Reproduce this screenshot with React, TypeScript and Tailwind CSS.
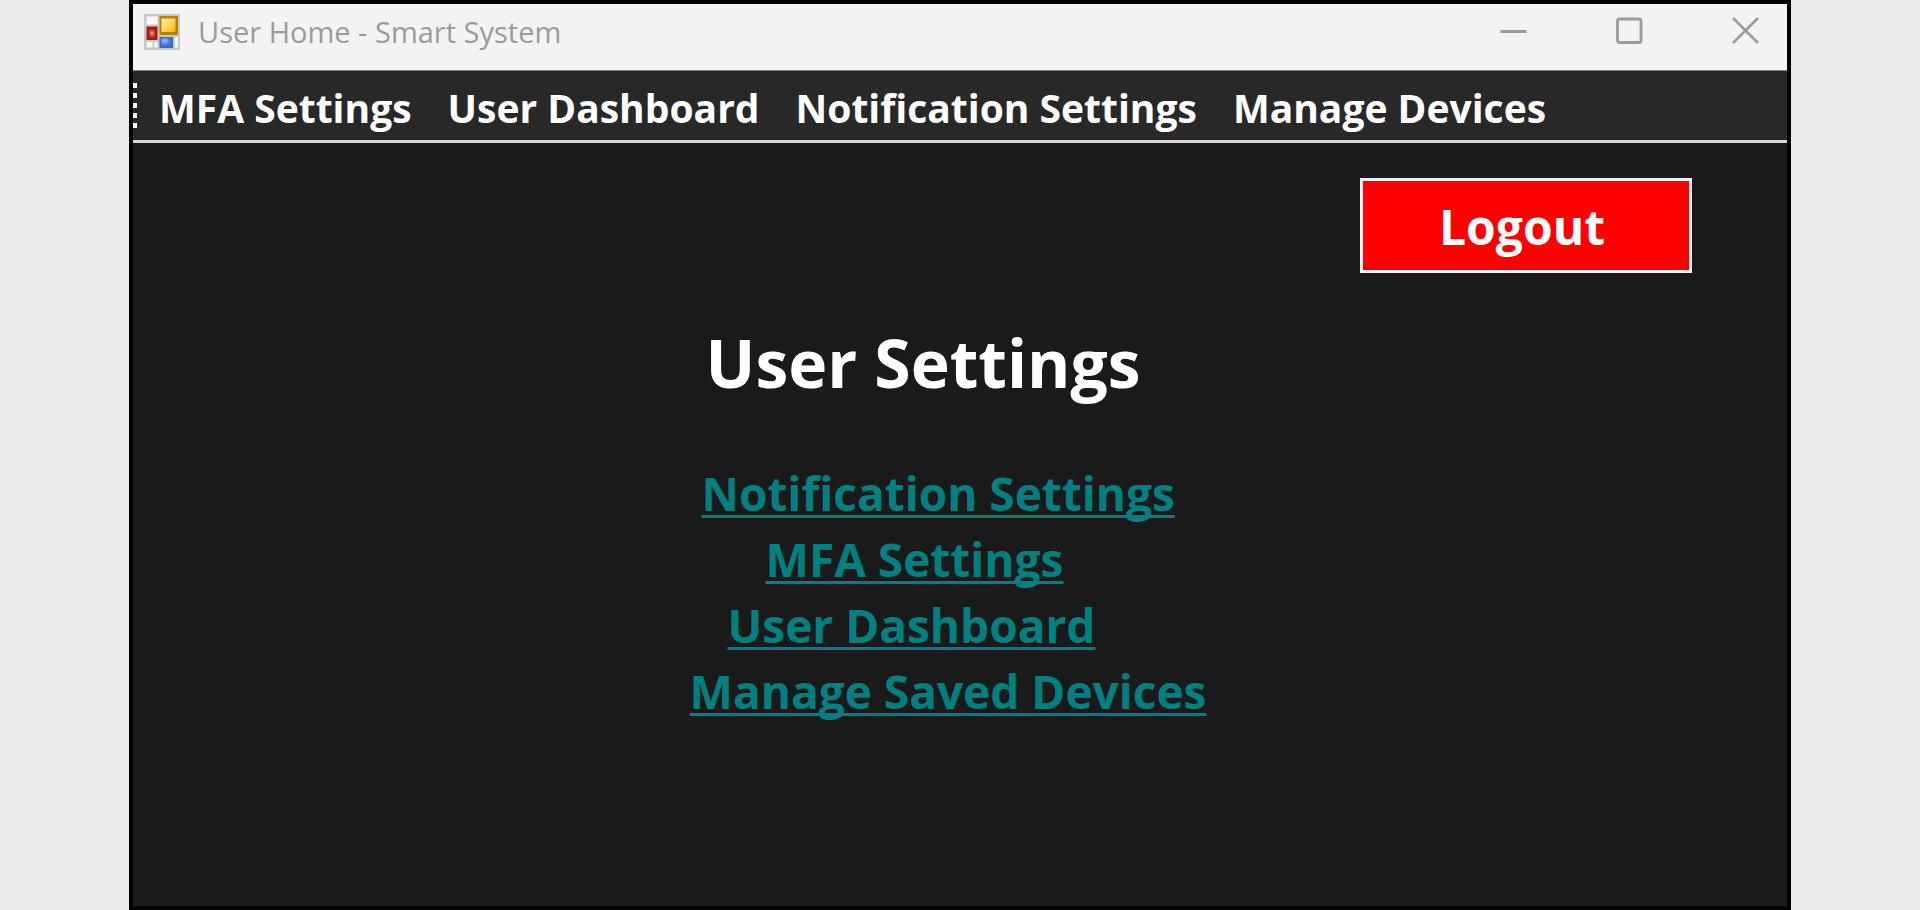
import { useState } from "react";

const menuItems = [
  { label: "MFA Settings", href: "#mfa" },
  { label: "User Dashboard", href: "#dashboard" },
  { label: "Notification Settings", href: "#notifications" },
  { label: "Manage Devices", href: "#devices" },
];

const settingsLinks = [
  { label: "Notification Settings", href: "#notifications", indent: "ml-3" },
  { label: "MFA Settings", href: "#mfa", indent: "ml-[76px]" },
  { label: "User Dashboard", href: "#dashboard", indent: "ml-[38px]" },
  { label: "Manage Saved Devices", href: "#devices", indent: "ml-0" },
];

function FormIcon() {
  return (
    <svg className="size-9" viewBox="0 0 36 36" aria-hidden="true">
      <defs>
        <linearGradient id="gold" x1="0" y1="0" x2="1" y2="1">
          <stop offset="0" stopColor="#fff0b0" />
          <stop offset="1" stopColor="#fbb800" />
        </linearGradient>
        <radialGradient id="red">
          <stop offset="0" stopColor="#f5a090" />
          <stop offset="1" stopColor="#c42a1c" />
        </radialGradient>
        <radialGradient id="blue" cx="0.35" cy="0.35">
          <stop offset="0" stopColor="#9cc4ff" />
          <stop offset="1" stopColor="#3f74dc" />
        </radialGradient>
      </defs>
      <rect width="36" height="36" fill="#c9c9c9" />
      <rect x="2.5" y="2.5" width="11" height="8" fill="#f8f8f8" />
      <rect x="2.5" y="28" width="6" height="5.5" fill="#f8f8f8" />
      <rect x="10.5" y="28" width="3" height="5.5" fill="#f8f8f8" />
      <rect x="31" y="23" width="3" height="10.5" fill="#f8f8f8" />
      <rect x="15.5" y="2" width="18.5" height="19" fill="#b58208" />
      <rect x="17.5" y="4.5" width="14" height="13.5" fill="url(#gold)" />
      <rect x="2.5" y="12.5" width="11" height="13.5" fill="#a31d14" />
      <rect x="5" y="15" width="6" height="8.5" fill="url(#red)" />
      <rect x="15.5" y="23" width="13.5" height="11" fill="#3668cc" />
      <rect x="17" y="24" width="10.5" height="8.5" fill="url(#blue)" />
    </svg>
  );
}

function TitleBar() {
  return (
    <header className="flex h-[67px] items-start justify-between border-b border-[#808080] bg-[#f3f3f3] pt-2 pr-7 pl-[11px]">
      <div className="flex items-center gap-[18px]">
        <FormIcon />
        <h1 className="text-[29px] leading-10 text-[#9b9b9b]">
          User Home - Smart System
        </h1>
      </div>
      <div className="flex gap-[89px] pt-[5px] text-[#9b9b9b]">
        <button type="button" aria-label="Minimize">
          <svg className="size-[27px]" viewBox="0 0 27 27" fill="none" stroke="currentColor" strokeWidth="3">
            <path d="M0.5 14.5H26.5" />
          </svg>
        </button>
        <button type="button" aria-label="Maximize">
          <svg className="size-[27px]" viewBox="0 0 27 27" fill="none" stroke="currentColor" strokeWidth="2.8">
            <rect x="1.5" y="2" width="23.5" height="23.5" rx="2" />
          </svg>
        </button>
        <button type="button" aria-label="Close">
          <svg className="size-[27px]" viewBox="0 0 27 27" fill="none" stroke="currentColor" strokeWidth="2.6">
            <path d="M1 1L26 26M26 1L1 26" />
          </svg>
        </button>
      </div>
    </header>
  );
}

function MenuBar() {
  return (
    <nav className="flex h-[72px] items-center border-b-3 border-[#d8d8d8] bg-[#282828]">
      <div className="flex flex-col gap-[5px]" aria-hidden="true">
        <span className="h-[5px] w-1 bg-white" />
        <span className="h-[5px] w-1 bg-white" />
        <span className="h-[5px] w-1 bg-white" />
        <span className="h-[5px] w-1 bg-white" />
        <span className="h-[5px] w-1 bg-white" />
      </div>
      <ul className="ml-[22px] flex gap-9 pt-1">
        {menuItems.map((item) => (
          <li key={item.label}>
            <a href={item.href} className="text-[39px] leading-[52px] font-bold whitespace-nowrap text-white">
              {item.label}
            </a>
          </li>
        ))}
      </ul>
    </nav>
  );
}

export default function App() {
  const [loggedIn, setLoggedIn] = useState(true);

  return (
    <div className="flex min-h-screen bg-[#ebeae8] px-[129px] font-['Open_Sans','Noto_Sans',sans-serif]">
      <div className="flex flex-1 flex-col border-4 border-black bg-[#1a1a1a]">
        <TitleBar />
        <MenuBar />
        <main className="flex flex-1 flex-col">
          <div className="flex justify-end pt-[35px] pr-[95px]">
            <button
              type="button"
              onClick={() => setLoggedIn(!loggedIn)}
              className="h-[95px] w-[332px] border-3 border-[#f0f0f0] bg-[#ff0000] pt-0.5 pr-2 text-[48px] leading-[60px] font-bold text-white"
            >
              {loggedIn ? "Logout" : "Login"}
            </button>
          </div>
          <div className="mx-auto mt-11 pr-6">
            <h2 className="ml-4 text-[66px] leading-[90px] font-bold text-white">
              User Settings
            </h2>
            <ul className="mt-[53px]">
              {settingsLinks.map((link) => (
                <li key={link.label} className={link.indent}>
                  <a
                    href={link.href}
                    className="text-[46px] leading-[66px] font-bold text-[#008080] underline decoration-3 underline-offset-4 [text-decoration-skip-ink:none]"
                  >
                    {link.label}
                  </a>
                </li>
              ))}
            </ul>
          </div>
        </main>
      </div>
    </div>
  );
}
